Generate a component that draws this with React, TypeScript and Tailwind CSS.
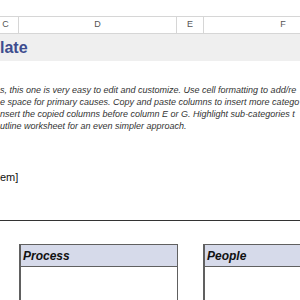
import React from "react";

const font = { fontFamily: '"Liberation Sans", Arial, sans-serif' };

function Box({ title, className }: { title: string; className: string }) {
  return (
    <div className={`flex flex-col border-t border-r border-l-2 border-[#606060] h-[60px] ${className}`}>
      <div className="h-[22px] bg-[#d6daea] border-b border-[#606060] flex items-center pl-[2px]">
        <span className="text-[12px] font-bold italic text-[#111]">{title}</span>
      </div>
      <div className="flex-1 bg-white" />
    </div>
  );
}

export default function App() {
  return (
    <div className="w-[300px] h-[300px] overflow-hidden bg-white" style={font}>
      <div className="h-[16px]" />
      <div className="h-[18px] flex border-t border-b border-[#d6d6d6] text-[9px] text-[#555] whitespace-nowrap">
        <div className="w-[19px] shrink-0 border-r border-[#d6d6d6] flex items-center justify-center pr-[7px]">C</div>
        <div className="w-[158px] shrink-0 border-r border-[#d6d6d6] flex items-center justify-center">D</div>
        <div className="w-[27px] shrink-0 border-r border-[#d6d6d6] flex items-center justify-center">E</div>
        <div className="w-[158px] shrink-0 flex items-center justify-center">F</div>
      </div>
      <div className="h-[27px] bg-[#efefef] flex items-center">
        <span className="text-[16px] font-bold text-[#3d4c8e] leading-none">late</span>
      </div>
      <div className="h-[23px]" />
      <div className="text-[9px] italic text-[#333] leading-[12px] whitespace-nowrap overflow-hidden">
        <div>s, this one is very easy to edit and customize. Use cell formatting to add/re</div>
        <div>e space for primary causes. Copy and paste columns to insert more catego</div>
        <div>nsert the copied columns before column E or G. Highlight sub-categories t</div>
        <div>utline worksheet for an even simpler approach.</div>
      </div>
      <div className="h-[39px]" />
      <div className="text-[11px] text-[#111] leading-[12px]">em]</div>
      <div className="h-[37px]" />
      <div className="h-px bg-[#333]" />
      <div className="h-[23px]" />
      <div className="flex">
        <div className="w-[19px] shrink-0" />
        <Box title="Process" className="w-[159px] shrink-0" />
        <div className="w-[25px] shrink-0" />
        <Box title="People" className="w-[120px] shrink-0" />
      </div>
    </div>
  );
}
